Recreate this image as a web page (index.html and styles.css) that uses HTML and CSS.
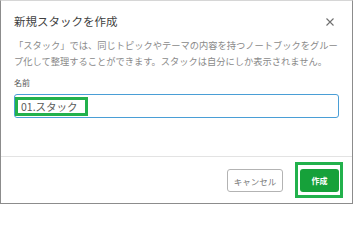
FILE: index.html
```html
<!DOCTYPE html>
<html lang="ja">
<head>
<meta charset="utf-8">
<link rel="stylesheet" href="styles.css">
</head>
<body>
<div class="dialog">
  <div class="header">
    <h1 class="title">新規スタックを作成</h1>
    <button class="close" aria-label="閉じる">
      <svg width="8" height="8" viewBox="0 0 8 8"><path d="M0.5 0.5 L7.5 7.5 M7.5 0.5 L0.5 7.5" stroke="#6f6f6f" stroke-width="1.1" fill="none"/></svg>
    </button>
  </div>
  <div class="body">
    <p class="desc">「スタック」では、同じトピックやテーマの内容を持つノートブックをグループ化して整理することができます。スタックは自分にしか表示されません。</p>
    <label class="label">名前</label>
    <div class="input">
      <span class="mark">01.スタック</span>
    </div>
  </div>
  <div class="footer">
    <button class="btn cancel">キャンセル</button>
    <span class="mark-btn"><button class="btn create">作成</button></span>
  </div>
</div>
</body>
</html>
```
FILE: styles.css
```css
* { box-sizing: border-box; }
html, body { margin: 0; padding: 0; background: #fff; }
body { font-family: "Noto Sans CJK JP", "Noto Sans", sans-serif; }

.dialog {
  width: 353px;
  height: 204px;
  border: 1px solid #8c8c8c;
  border-top-color: #d6d6d6;
  display: flex;
  flex-direction: column;
  background: #fff;
}

.header {
  display: flex;
  align-items: center;
  justify-content: space-between;
  padding: 11px 18px 0 13px;
  height: 28px;
}
.title {
  margin: 0;
  font-size: 11.5px;
  line-height: 16px;
  font-weight: normal;
  color: #3f3f3f;
}
.close {
  border: 0;
  background: none;
  padding: 0;
  width: 8px;
  height: 8px;
  display: flex;
  margin-top: 2px;
}

.body {
  padding: 0 13px;
  flex: 1;
  display: flex;
  flex-direction: column;
}
.desc {
  margin: 8px 0 0;
  font-size: 9.25px;
  line-height: 16px;
  color: #8a8a8a;
}
.label {
  margin-top: 8px;
  font-size: 8px;
  line-height: 12px;
  color: #555;
}
.input {
  margin-top: 5px;
  height: 24px;
  border: 1px solid #4a9ed6;
  border-radius: 3px;
  display: flex;
  align-items: center;
}
.mark {
  border: 3px solid #22b14c;
  height: 19px;
  width: 73px;
  padding-left: 3px;
  font-size: 10.5px;
  line-height: 13px;
  color: #5a5a5a;
  display: flex;
  align-items: center;
}

.footer {
  border-top: 1px solid #e3e3e3;
  height: 47px;
  display: flex;
  justify-content: flex-end;
  align-items: flex-start;
  padding: 5px 9px 0 0;
  gap: 12px;
}
.btn {
  font-family: inherit;
  font-size: 8px;
  height: 23px;
  border-radius: 3px;
  padding: 0;
  margin: 0;
}
.cancel {
  margin-top: 7px;
  width: 56px;
  border: 1px solid #b3b3b3;
  background: #fff;
  color: #7a7a7a;
  font-size: 8.5px;
}
.mark-btn {
  border: 3px solid #22b14c;
  padding: 4px 1px 3px 2px;
  display: flex;
}
.create {
  width: 39px;
  border: 0;
  background: #16a13a;
  color: #fff;
  font-weight: bold;
}
```
